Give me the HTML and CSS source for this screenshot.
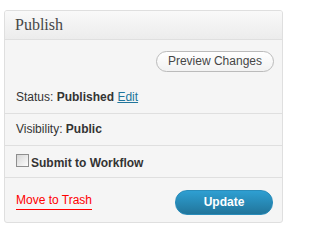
FILE: index.html
```html
<!DOCTYPE html>
<html>
<head>
<meta charset="utf-8">
<link rel="stylesheet" href="styles.css">
</head>
<body>
<div class="box">
  <div class="hdr"><h3 class="title">Publish</h3></div>
  <div class="preview-row"><button class="btn-preview">Preview Changes</button></div>
  <div class="misc"><span>Status: <b>Published</b> <a class="edit" href="#">Edit</a></span></div>
  <div class="misc"><span>Visibility: <b>Public</b></span></div>
  <div class="misc check-row"><input type="checkbox" class="cb"><b class="cb-label">Submit to Workflow</b></div>
  <div class="major">
    <a class="trash" href="#">Move to Trash</a>
    <button class="btn-update">Update</button>
  </div>
</div>
</body>
</html>
```

FILE: styles.css
```css
html, body { margin: 0; padding: 0; background: #fff; }
body {
  padding: 10px 0 0 4px;
  font-family: "Liberation Sans", Arial, sans-serif;
  font-size: 12px;
  color: #333;
}
.box {
  width: 279px;
  box-sizing: border-box;
  border: 1px solid #dfdfdf;
  border-radius: 3px;
  background: #f5f5f5;
  overflow: hidden;
}
.hdr {
  height: 28px;
  border-bottom: 1px solid #dfdfdf;
  background: linear-gradient(to bottom, #f9f9f9, #ececec);
  padding-left: 10px;
}
.title {
  margin: 0;
  font-family: "Liberation Serif", "DejaVu Serif", serif;
  font-weight: normal;
  font-size: 16px;
  line-height: 28px;
  color: #464646;
}
.preview-row {
  display: flex;
  justify-content: flex-end;
  padding: 11px 8px 10px 0;
}
.btn-preview {
  height: 21px;
  padding: 0 11px;
  border: 1px solid #bbb;
  border-radius: 11px;
  background: linear-gradient(to bottom, #fff, #f2f2f2);
  font-family: "Liberation Sans", Arial, sans-serif;
  font-size: 12px;
  color: #464646;
  line-height: 19px;
}
.misc {
  height: 31px;
  box-sizing: content-box;
  display: flex;
  align-items: center;
  padding: 0 0 0 11px;
  border-bottom: 1px solid #dfdfdf;
  color: #333;
}
.misc > span { position: relative; top: -1px; }
.edit { color: #21759b; text-decoration: underline; }
.check-row { gap: 2px; }
.cb {
  appearance: none;
  -webkit-appearance: none;
  margin: 0;
  width: 13px;
  height: 13px;
  box-sizing: border-box;
  border: 1px solid #8e8e8e;
  background: linear-gradient(135deg, #d6d6d6, #fdfdfd);
  position: relative;
  top: -1px;
}
.cb-label { position: relative; top: 1px; }
.major {
  height: 44px;
  display: flex;
  align-items: center;
  justify-content: space-between;
  padding: 0 9px 0 11px;
}
.trash {
  color: #f00;
  text-decoration: none;
  border-bottom: 1px solid #f00;
  line-height: 14px;
  padding-bottom: 2px;
  position: relative;
  top: 1px;
}
.btn-update {
  width: 98px;
  height: 25px;
  border: 1px solid #298cba;
  border-radius: 12px;
  background: linear-gradient(to bottom, #2e9fd2, #21759b);
  color: #fff;
  font-family: "Liberation Sans", Arial, sans-serif;
  font-weight: bold;
  font-size: 12px;
  position: relative;
  top: 2px;
}
```
